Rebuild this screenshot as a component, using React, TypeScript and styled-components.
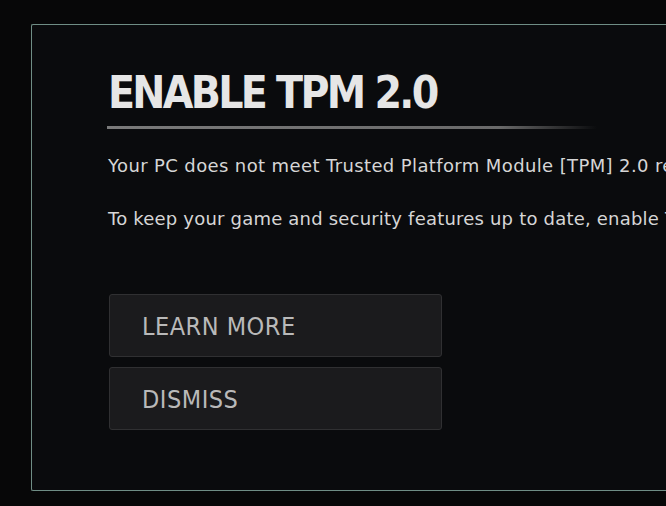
import React from 'react'
import styled, { createGlobalStyle } from 'styled-components'

const GlobalStyle = createGlobalStyle`
  html, body {
    margin: 0;
    padding: 0;
    background: #070708;
    overflow: hidden;
  }
  body {
    font-family: 'DejaVu Sans', sans-serif;
  }
`

const Screen = styled.div`
  width: 666px;
  height: 506px;
  padding: 24px 0 15px 31px;
  box-sizing: border-box;
  display: flex;
  overflow: hidden;
`

const Panel = styled.section`
  flex: 1;
  margin-right: -40px;
  background: #0a0b0d;
  border: 1px solid #6f8d85;
  border-right: none;
  border-radius: 2px 0 0 2px;
  padding: 40px 0 0 76px;
  box-sizing: border-box;
  display: flex;
  flex-direction: column;
  overflow: hidden;
`

const Title = styled.h1`
  margin: 0;
  font-family: 'DejaVu Sans Condensed', 'DejaVu Sans', sans-serif;
  font-weight: 700;
  font-size: 44px;
  line-height: 56px;
  letter-spacing: -2.7px;
  color: #e6e6e6;
  white-space: nowrap;
`

const Rule = styled.div`
  width: 490px;
  height: 3px;
  margin: 5px 0 0 -1px;
  background: linear-gradient(to right, #7a7a7a 0%, #6a6a6a 80%, rgba(80, 80, 80, 0) 100%);
`

const Body = styled.p`
  margin: 0;
  font-size: 18px;
  line-height: 22px;
  letter-spacing: 0.38px;
  color: #d6d6d6;
  white-space: nowrap;
  & + & {
    margin-top: 31px;
    letter-spacing: 0.2px;
  }
`

const Copy = styled.div`
  margin-top: 26px;
`

const Actions = styled.div`
  margin-top: 64px;
  display: flex;
  flex-direction: column;
  gap: 10px;
  margin-left: 1px;
`

const ActionButton = styled.button`
  width: 333px;
  height: 63px;
  box-sizing: border-box;
  padding: 2px 0 0 32px;
  text-align: left;
  background: #1b1b1d;
  border: 1px solid #303032;
  border-radius: 3px;
  font-family: 'DejaVu Sans Condensed', 'DejaVu Sans', sans-serif;
  font-size: 25px;
  letter-spacing: 0.5px;
  color: #b9b9b9;
  cursor: pointer;
`

export default function App() {
  return (
    <>
      <GlobalStyle />
      <Screen>
        <Panel>
          <Title>ENABLE TPM 2.0</Title>
          <Rule />
          <Copy>
            <Body>Your PC does not meet Trusted Platform Module [TPM] 2.0 requirements.</Body>
            <Body>To keep your game and security features up to date, enable TPM 2.0.</Body>
          </Copy>
          <Actions>
            <ActionButton>LEARN MORE</ActionButton>
            <ActionButton>DISMISS</ActionButton>
          </Actions>
        </Panel>
      </Screen>
    </>
  )
}
